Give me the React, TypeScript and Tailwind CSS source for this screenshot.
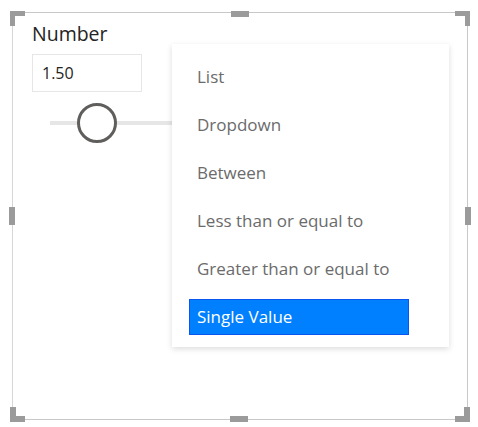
import React from "react";

const options = [
  "List",
  "Dropdown",
  "Between",
  "Less than or equal to",
  "Greater than or equal to",
  "Single Value",
];

const font = { fontFamily: '"Open Sans", "Noto Sans", sans-serif' };

// little grey grips that sit on the selection frame
const handles = [
  "-left-[3px] -top-[2px] w-[15px] h-[5px]",
  "-left-[3px] -top-[2px] w-[5px] h-[15px]",
  "-right-[3px] -top-[2px] w-[15px] h-[5px]",
  "-right-[3px] -top-[2px] w-[5px] h-[15px]",
  "-left-[3px] -bottom-[3px] w-[15px] h-[6px]",
  "-left-[3px] -bottom-[3px] w-[6px] h-[15px]",
  "-right-[3px] -bottom-[3px] w-[15px] h-[6px]",
  "-right-[3px] -bottom-[3px] w-[6px] h-[15px]",
  "left-[218px] -top-[2px] w-[18px] h-[6px]",
  "left-[217px] -bottom-[3px] w-[18px] h-[6px]",
  "-left-[4px] top-[194px] w-[6px] h-[18px]",
  "-right-[4px] top-[194px] w-[6px] h-[18px]",
];

export default function App() {
  return (
    <div
      className="relative w-[478px] h-[427px] bg-white overflow-hidden"
      style={font}
    >
      {/* visual frame */}
      <div className="relative ml-[12px] mt-[12px] w-[456px] h-[408px] border border-[#c8c8c8] border-l-[#d6d6d6]">
        <div className="pl-[19px] pt-[7px]">
          <div className="text-[19.5px] leading-[27px] text-[#252423]">Number</div>
          <div className="mt-[7px] w-[110px] h-[38px] border border-[#e6e6e6] flex items-center pl-[9px] text-[16px] text-[#252423]">
            1.50
          </div>
          <div className="relative mt-[11px] h-[40px] flex items-center">
            <div className="ml-[18px] w-[200px] h-[4px] bg-[#e6e6e6]" />
            <div className="absolute left-[45px] top-0 w-[40px] h-[40px] rounded-full bg-white border-[3px] border-[#605e5c]" />
          </div>
        </div>

        {handles.map((h) => (
          <div key={h} className={"absolute bg-[#9b9b9b] " + h} />
        ))}
      </div>

      {/* dropdown menu */}
      <div className="absolute left-[172px] top-[44px] w-[277px] h-[303px] bg-white shadow-[0_2px_6px_rgba(0,0,0,0.14)] pt-[15px] pb-[12px] pl-[17px] flex flex-col gap-[12px]">
        {options.map((o, i) => {
          const sel = i === options.length - 1;
          return (
            <div
              key={o}
              className={
                sel
                  ? "w-[220px] h-[36px] flex items-center pl-[7px] text-[17px] text-white bg-[#0080ff] border border-[#0a55f0]"
                  : "w-[220px] h-[36px] flex items-center pl-[8px] text-[17px] text-[#6b6b6b]"
              }
            >
              {o}
            </div>
          );
        })}
      </div>
    </div>
  );
}
